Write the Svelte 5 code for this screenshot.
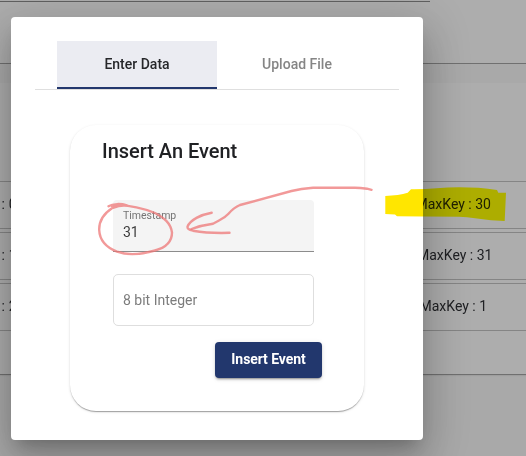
<script>
  const rows = [
    { min: '0', max: '30', x: 414 },
    { min: '1', max: '31', x: 415.5 },
    { min: '2', max: '1', x: 418 },
  ];
  let tab = $state('Enter Data');
</script>

<div class="screen">
  <div class="page">
    <div class="top"></div>
    <div class="mid"></div>
    <div class="gap"></div>
    <section class="panel">
      <div class="list">
        {#each rows as r}
          <div class="row">
            <span class="min">: {r.min}</span>
            <span class="max" style="margin-left:{r.x}px">MaxKey : {r.max}</span>
          </div>
        {/each}
      </div>
    </section>
  </div>

  <div class="dialog">
    <nav class="tabs">
      {#each ['Enter Data', 'Upload File'] as name}
        <button class="tab" class:active={tab === name} onclick={() => (tab = name)}>{name}</button>
      {/each}
    </nav>
    <div class="card">
      <h2>Insert An Event</h2>
      <div class="field filled">
        <label for="ts">Timestamp</label>
        <span id="ts">31</span>
      </div>
      <div class="field outlined">8 bit Integer</div>
      <button class="submit">Insert Event</button>
    </div>
  </div>

  <svg class="marker" width="526" height="456" viewBox="0 0 526 456">
    <defs>
      <linearGradient id="ink" gradientUnits="userSpaceOnUse" x1="0" y1="0" x2="526" y2="0">
        <stop offset=".8042" stop-color="#ffe600" />
        <stop offset=".8042" stop-color="#ffff00" />
      </linearGradient>
    </defs>
    <path d="M385.3 196C394 195.500 402 194.500 407.700 192.700L411 189.300C427 189.600 443 187.400 459 187.300C472 187.300 485 188 497 190L498.300 192.700L506 192.700L504.700 221L491 220.300C480 219 470 217 459 216.700L423 216.500L397 216.200L395 214.500L385.300 214Z" fill="url(#ink)" />
  </svg>
  <svg class="pen" width="526" height="456" viewBox="0 0 526 456">
    <g fill="none" stroke="#ee7777" stroke-opacity=".75" stroke-width="2.400" stroke-linecap="round" stroke-linejoin="round">
      <path d="M108.500 206.200C113 203.500 121 203.500 127 205.400C121 205.300 117 206 112 208.200C103 214 99 222 99.200 230C99.700 242 109 248.500 117 251.700C129 256 143 254 155 250.500C166 247.500 172 241 172 232.500C170.500 222.500 164 218 155 213C142 208 125 204 112 206" />
      <path d="M371.500 189.800L367 188.700Q360 187.700 355 187.700L313 187.700Q301 188.500 291.500 191L240 205Q234 207.500 228.500 213.700Q225 217.500 219 220.500L213 223.700Q202 225 191.500 229" />
      <path d="M211.700 212.700C201 214.500 190 220 187.500 226.700Q187 229.200 193 230.700Q209 233.500 229.500 232.800" />
    </g>
  </svg>
</div>

<style>
  .screen {
    position: relative;
    width: 526px;
    height: 456px;
    overflow: hidden;
    background: linear-gradient(#adadad 0 63px, #a9a9a9 63px);
    font-family: Roboto, 'Liberation Sans', sans-serif;
    color: #202124;
  }
  .page { display: flex; flex-direction: column; }
  .top, .mid { flex: none; }
  .top { width: 430px; height: 1px; border-bottom: 1px solid #606060; }
  .mid { height: 61px; border-bottom: 1px solid #707070; }
  .gap { height: 19px; }
  .panel {
    height: 291px;
    background: #adadad;
    border-bottom: 1px solid #707070;
    box-shadow: 0 1px 1px #9e9e9e;
  }
  .list {
    display: flex;
    flex-direction: column;
    gap: 3px;
    padding-top: 98px;
  }
  .row {
    display: flex;
    align-items: center;
    box-sizing: border-box;
    height: 48px;
    padding-bottom: 2px;
    border-top: 1px solid #858585;
    border-bottom: 1px solid #858585;
    font-size: 14px;
    line-height: 20px;
    white-space: nowrap;
  }
  .min { width: 0; padding-left: 1.5px; letter-spacing: .25px; }
  .dialog {
    position: absolute;
    left: 11px;
    top: 17px;
    width: 412px;
    height: 423px;
    box-sizing: border-box;
    padding: 24px;
    border-radius: 4px;
    background: #fff;
    box-shadow: 0 11px 15px -7px rgba(0,0,0,.2), 0 24px 38px 3px rgba(0,0,0,.14), 0 9px 46px 8px rgba(0,0,0,.12);
  }
  .tabs {
    display: flex;
    justify-content: center;
    height: 48px;
    border-bottom: 1px solid #dfdfdf;
  }
  button { border: 0; font-family: inherit; padding: 0; font-weight: 500; }
  .tab {
    width: 160px;
    height: 48px;
    padding-bottom: 2px;
    background: #fff;
    color: #858585;
    font-size: 14px;
  }
  .tab.active {
    background: #ebecf2;
    color: #26272a;
    border-bottom: 2px solid #22376d;
    padding-bottom: 0;
  }
  .card {
    display: flex;
    flex-direction: column;
    box-sizing: border-box;
    width: 294px;
    height: 286px;
    margin: 35px 0 0 35px;
    padding: 13px 42px 0 43px;
    border-radius: 26px;
    background: #fff;
    box-shadow: 0 2px 1px -1px rgba(0,0,0,.2), 0 1px 1px 0 rgba(0,0,0,.14), 0 1px 3px 0 rgba(0,0,0,.12);
  }
  h2 {
    margin: 0 0 36px -11px;
    font-size: 20px;
    line-height: 26px;
    font-weight: 500;
    letter-spacing: -.02px;
    white-space: nowrap;
  }
  .field {
    box-sizing: border-box;
    width: 201px;
    height: 52px;
    flex: none;
    padding: 0 10px;
    font-size: 14px;
  }
  .filled {
    display: flex;
    flex-direction: column;
    padding-top: 8px;
    background: #f4f4f4;
    border-radius: 4px 4px 0 0;
    border-bottom: 1px solid #8c8c8c;
    color: #3c3c3c;
    line-height: 18px;
  }
  label { font-size: 10.5px; line-height: 15px; color: #757575; }
  .outlined {
    display: flex;
    align-items: center;
    margin-top: 22px;
    padding: 0 9px;
    border: 1px solid #dedede;
    border-radius: 5px;
    color: #7c7c7c;
  }
  .submit {
    width: 107px;
    height: 36px;
    flex: none;
    align-self: flex-end;
    margin: 16px -7px 0 0;
    padding-bottom: 2px;
    border-radius: 4px;
    background: #22376d;
    color: #fff;
    font-size: 14px;
    font-weight: 700;
    letter-spacing: -.08px;
    box-shadow: 0 3px 1px -2px rgba(0,0,0,.2), 0 2px 2px rgba(0,0,0,.14), 0 1px 5px rgba(0,0,0,.12);
  }
  .submit { margin-right: 0; }
  .marker, .pen { position: absolute; left: 0; top: 0; pointer-events: none; }
  .marker { mix-blend-mode: multiply; }
</style>
